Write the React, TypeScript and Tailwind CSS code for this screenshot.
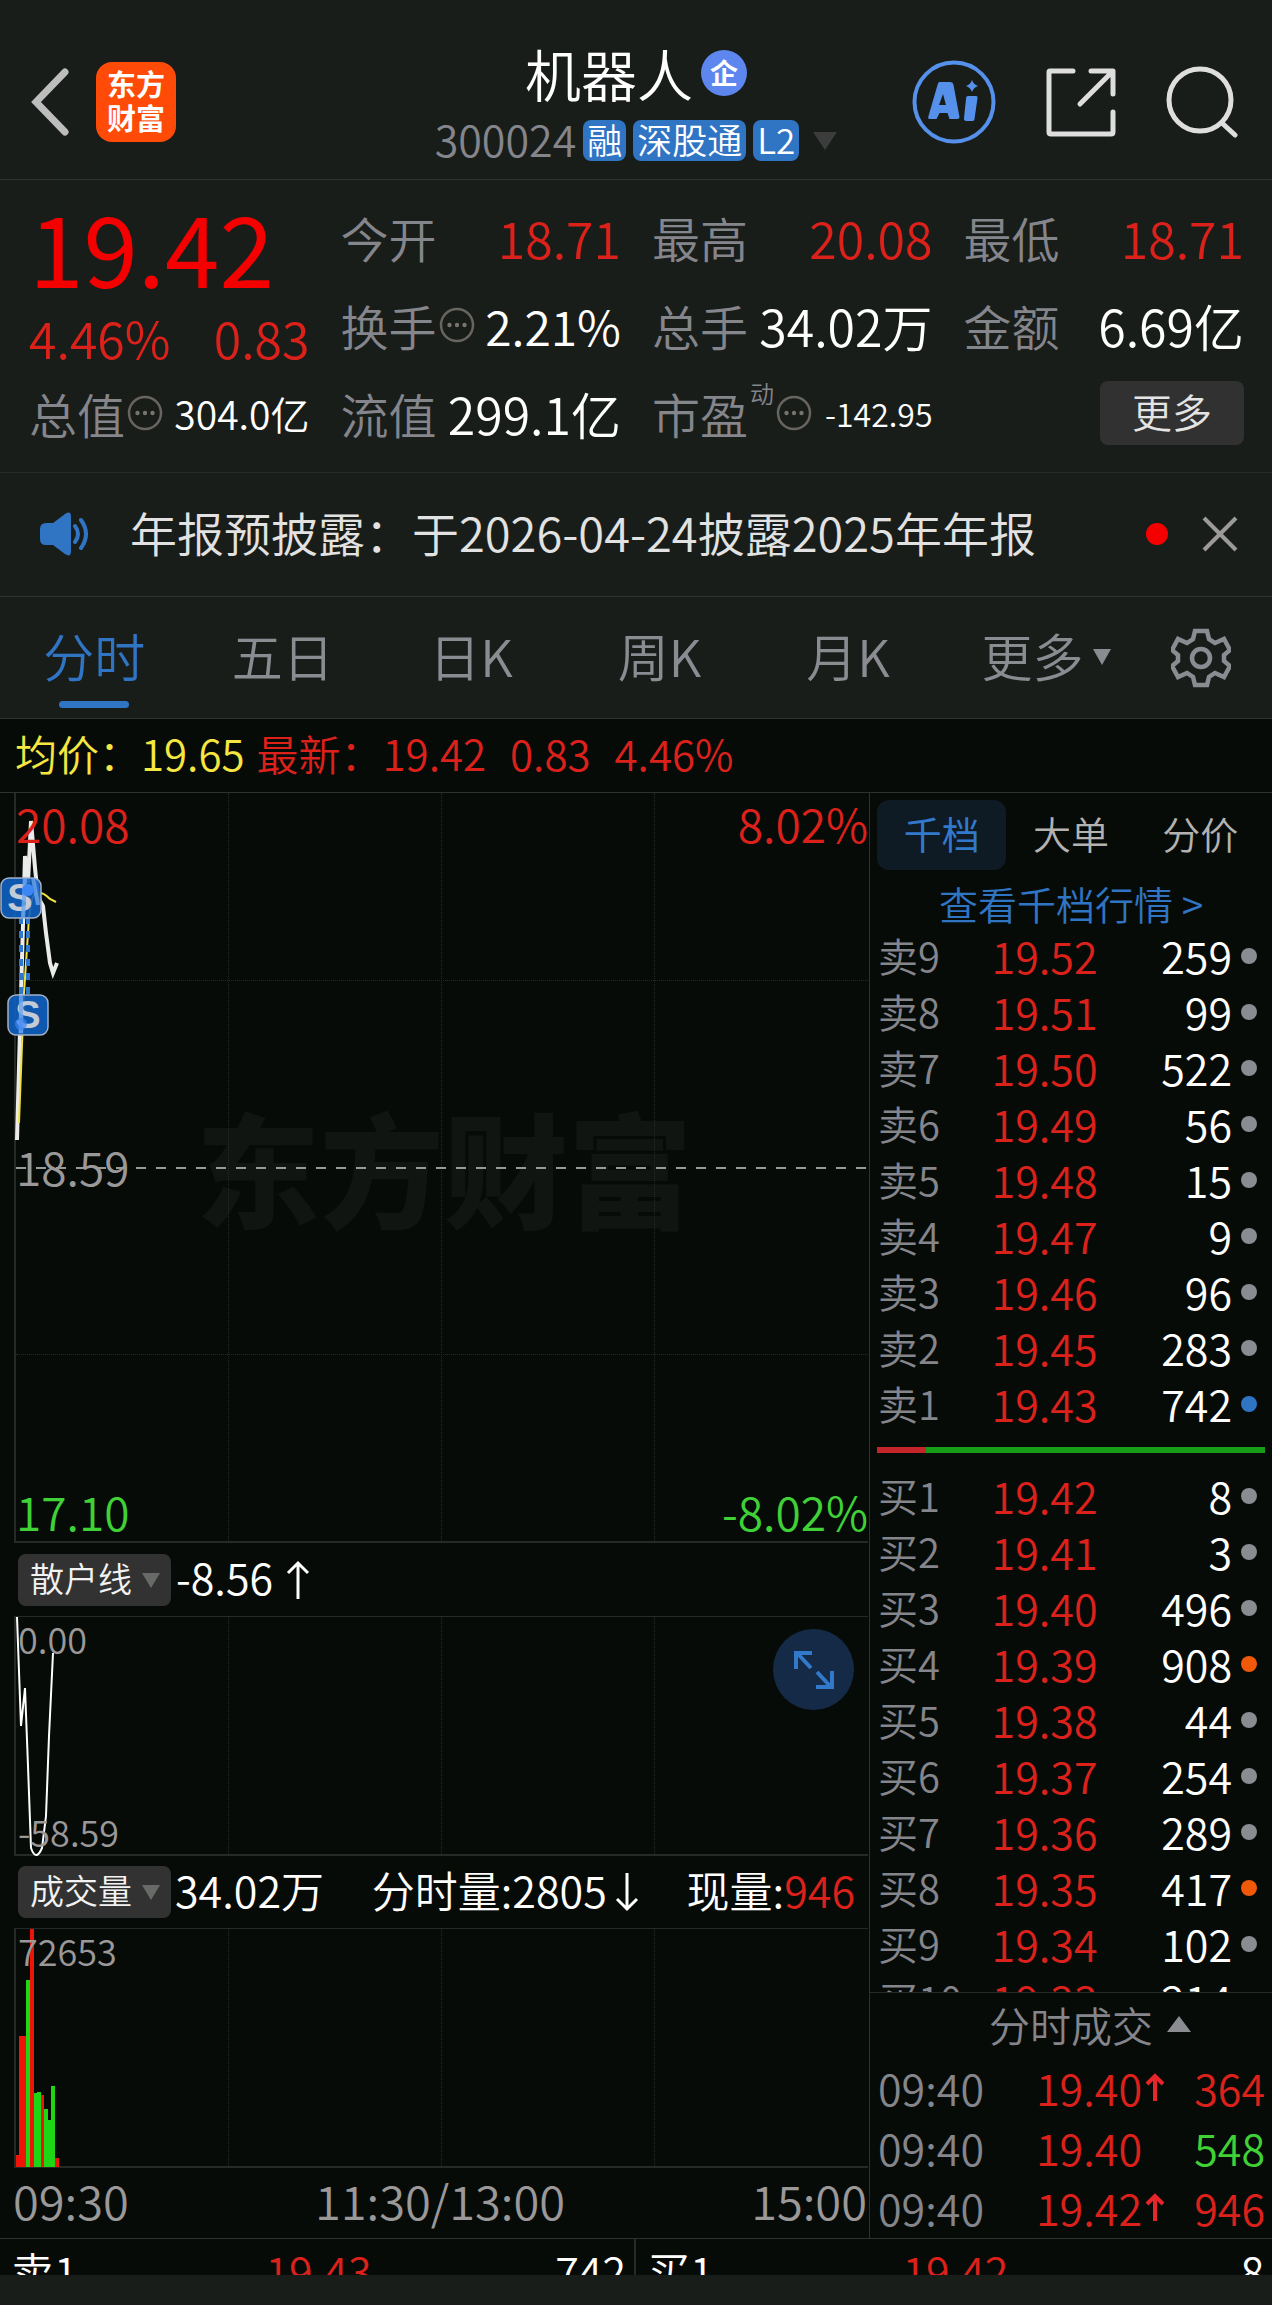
import React from 'react';
import clsx from 'clsx';

type Dot = 'gray' | 'blue' | 'orange';

interface BookLevel {
  label: string;
  price: string;
  volume: string;
  dot: Dot;
}

const asks: BookLevel[] = [
  { label: '卖9', price: '19.52', volume: '259', dot: 'gray' },
  { label: '卖8', price: '19.51', volume: '99', dot: 'gray' },
  { label: '卖7', price: '19.50', volume: '522', dot: 'gray' },
  { label: '卖6', price: '19.49', volume: '56', dot: 'gray' },
  { label: '卖5', price: '19.48', volume: '15', dot: 'gray' },
  { label: '卖4', price: '19.47', volume: '9', dot: 'gray' },
  { label: '卖3', price: '19.46', volume: '96', dot: 'gray' },
  { label: '卖2', price: '19.45', volume: '283', dot: 'gray' },
  { label: '卖1', price: '19.43', volume: '742', dot: 'blue' },
];

const bids: BookLevel[] = [
  { label: '买1', price: '19.42', volume: '8', dot: 'gray' },
  { label: '买2', price: '19.41', volume: '3', dot: 'gray' },
  { label: '买3', price: '19.40', volume: '496', dot: 'gray' },
  { label: '买4', price: '19.39', volume: '908', dot: 'orange' },
  { label: '买5', price: '19.38', volume: '44', dot: 'gray' },
  { label: '买6', price: '19.37', volume: '254', dot: 'gray' },
  { label: '买7', price: '19.36', volume: '289', dot: 'gray' },
  { label: '买8', price: '19.35', volume: '417', dot: 'orange' },
  { label: '买9', price: '19.34', volume: '102', dot: 'gray' },
  { label: '买10', price: '19.33', volume: '214', dot: 'orange' },
];

const trades = [
  { time: '09:40', price: '19.40', up: true, volume: '364', buy: true },
  { time: '09:40', price: '19.40', up: false, volume: '548', buy: false },
  { time: '09:40', price: '19.42', up: true, volume: '946', buy: true },
];

// x, top, width, up
const volumeBars: [number, number, number, boolean][] = [
  [16, 227, 4, true],
  [19, 108, 7, true],
  [26, 52, 4, false],
  [30, 1, 4, true],
  [34, 165, 3, false],
  [37, 164, 4, false],
  [41, 167, 3, true],
  [44, 181, 4, false],
  [48, 192, 3, false],
  [51, 158, 4, false],
  [55, 230, 4, true],
];

const MoreInfo = () => (
  <svg viewBox="0 0 36 36" className="ml-[2px] size-9 shrink-0" aria-hidden="true">
    <circle cx="18" cy="18" r="16" fill="none" stroke="#68645f" strokeWidth="2.5" />
    <circle cx="10.5" cy="18" r="2.2" fill="#77736e" />
    <circle cx="18" cy="18" r="2.2" fill="#77736e" />
    <circle cx="25.5" cy="18" r="2.2" fill="#77736e" />
  </svg>
);

const Arrow = ({ down = false }: { down?: boolean }) => (
  <svg viewBox="0 0 24 40" className="h-10 w-6 shrink-0" aria-hidden="true">
    <path
      d={down ? 'M12 1v36M2 27l10 10 10-10' : 'M12 39V3M2 13L12 3l10 10'}
      fill="none"
      stroke="#fff"
      strokeWidth="3"
    />
  </svg>
);

const Header = () => (
  <header className="grid grid-cols-[1fr_auto_1fr] border-b border-[#2f312f] pt-[42px] pb-[18px]">
    <div className="flex items-center gap-[26px] pl-[30px]">
      <button aria-label="返回">
        <svg viewBox="0 0 40 68" className="h-[68px] w-10">
          <path d="M35 4L6 34l29 30" fill="none" stroke="#bdbdbd" strokeWidth="7" strokeLinecap="round" />
        </svg>
      </button>
      <div className="flex size-20 flex-col items-center justify-center rounded-2xl bg-[#ff4a08] pb-1 text-[29px] leading-[34px] font-bold text-white">
        <span>东方</span>
        <span>财富</span>
      </div>
    </div>

    <div className="flex flex-col items-center">
      <h1 className="flex h-16 items-center gap-[8px] pb-[3px] text-[56px] leading-[64px] text-white">
        机器人
        <span className="flex size-[46px] items-center justify-center rounded-full bg-[#5d86ee] pb-[2px] text-[28px] leading-[30px] font-bold">
          企
        </span>
      </h1>
      <div className="flex items-center gap-[7px] pt-[14px] text-[35px] leading-[41px] text-white">
        <span className="-mt-1 text-[43px] text-[#85858c]">300024</span>
        <span className="h-[41px] rounded-lg bg-[#3074c4] px-[4px] leading-[38px]">融</span>
        <span className="h-[41px] rounded-lg bg-[#3074c4] px-[4px] leading-[38px]">深股通</span>
        <span className="h-[41px] rounded-lg bg-[#3074c4] px-[4px] leading-[38px]">L2</span>
        <button aria-label="切换股票" className="pl-[7px]">
          <svg viewBox="0 0 24 18" className="h-[18px] w-6">
            <path d="M0 0h24L12 18z" fill="#3b3c3b" />
          </svg>
        </button>
      </div>
    </div>

    <div className="flex items-center justify-end gap-[50px] pr-[34px]">
      <button aria-label="AI 助手">
        <svg viewBox="0 0 84 84" className="size-[84px]">
          <circle cx="42" cy="42" r="39.500" fill="none" stroke="#5590ea" strokeWidth="4" />
          <path
            fillRule="evenodd"
            fill="#5590ea"
            d="M27 22h11q3 0 3.500 3l6 32q0 2-2 2h-8l-2-6h-8l-3 6h-7q-2 0-1-3l9-31q1-3 1.500-3zM31 34l-4 11h7z"
          />
          <path fill="#5590ea" d="M56 36h8q2 0 1.500 2l-3 21q0 2-3 2h-5q-3 0-2.500-3l2-19q0-3 2-3zM60 20q1.500 4.500 6 6-4.500 1.500-6 6-1.500-4.500-6-6 4.500-1.500 6-6z" />
        </svg>
      </button>
      <button aria-label="分享">
        <svg viewBox="0 0 70 70" className="size-[70px]" fill="none" stroke="#dedede" strokeWidth="5" strokeLinecap="round" strokeLinejoin="round">
          <path d="M27 4H4q-1 0-1 1v60q0 2 2 2h60q2 0 2-2V45M45 4h22v23M66 5L34 37" />
        </svg>
      </button>
      <button aria-label="搜索">
        <svg viewBox="0 0 72 72" className="size-[72px]" fill="none" stroke="#dedede" strokeWidth="5" strokeLinecap="round">
          <circle cx="34" cy="34" r="31" />
          <path d="M56 57l13 12" />
        </svg>
      </button>
    </div>
  </header>
);

interface StatProps {
  label: string;
  value: string;
  info?: boolean;
  sup?: string;
  className?: string;
}

const Stat = ({ label, value, info, sup, className = 'text-[50px] text-white' }: StatProps) => (
  <div className="flex h-[88px] items-center">
    <span className="text-5xl text-[#85858c]">{label}</span>
    {sup && <sup className="self-start pt-5 pl-[2px] text-2xl text-[#85858c]">{sup}</sup>}
    {info && <MoreInfo />}
    <span className={clsx('ml-auto', className)}>{value}</span>
  </div>
);

const QuotePanel = () => (
  <section className="grid grid-cols-4 gap-x-[31px] border-b border-[#272a28] pt-[13px] pr-[28px] pb-[15px] pl-[29px] whitespace-nowrap">
    <div className="row-span-2">
      <div className="text-[98px] leading-[105px] font-normal text-[#f40000]">19.42</div>
      <div className="flex justify-between pt-[7px] text-[50px] leading-[64px] text-[#dc211b]">
        <span>4.46%</span>
        <span>0.83</span>
      </div>
    </div>
    <Stat label="今开" value="18.71" className="text-[50px] text-[#dc211b]" />
    <Stat label="最高" value="20.08" className="text-[50px] text-[#dc211b]" />
    <Stat label="最低" value="18.71" className="text-[50px] text-[#dc211b]" />
    <Stat label="换手" value="2.21%" info className="text-5xl text-white" />
    <Stat label="总手" value="34.02万" />
    <Stat label="金额" value="6.69亿" />
    <Stat label="总值" value="304.0亿" info className="text-[39px] text-white" />
    <Stat label="流值" value="299.1亿" />
    <Stat label="市盈" sup="动" value="-142.95" info className="text-[32px] text-white" />
    <div className="flex h-[88px] items-center justify-end">
      <button className="h-16 w-36 rounded-lg bg-[#313131] pb-1 text-[40px] leading-[60px] text-[#e4e4e4]">更多</button>
    </div>
  </section>
);

const Notice = () => (
  <section className="flex h-[124px] items-center border-b border-[#2f312f] pr-[34px] pb-[6px] pl-[38px]">
    <svg viewBox="0 0 54 46" className="mt-[4px] h-[46px] w-[54px] shrink-0" aria-hidden="true">
      <path d="M2 18q0-6 6-6h7L27 3q6-4 6 3v34q0 7-6 3l-12-9H8q-6 0-6-6z" fill="#3074c4" />
      <path d="M37 15q6 8 0 16M43 9q10 14 0 28" fill="none" stroke="#3074c4" strokeWidth="4" strokeLinecap="round" />
    </svg>
    <p className="pl-[38px] text-[47px] leading-[64px] whitespace-nowrap text-[#e2e2e2]">
      年报预披露：于2026-04-24披露2025年年报
    </p>
    <span className="mt-[4px] ml-auto size-[22px] rounded-full bg-[#f40000]" />
    <button aria-label="关闭" className="mt-[4px] ml-[34px]">
      <svg viewBox="0 0 36 36" className="size-9">
        <path d="M2 2l32 32M34 2L2 34" stroke="#9d9b9a" strokeWidth="4" />
      </svg>
    </button>
  </section>
);

const PeriodTabs = () => (
  <nav className="grid h-[122px] grid-cols-[repeat(6,4fr)_3fr] items-stretch border-b border-[#2f312f] text-[51px] leading-[110px] text-[#8b8b92]">
    <button className="relative pb-[5px] text-[#3074c4]">
      分时
      <span className="absolute bottom-[10px] left-1/2 h-[7px] w-[70px] -translate-x-1/2 rounded-full bg-[#3074c4]" />
    </button>
    <button className="pb-[5px]">五日</button>
    <button className="pb-[5px]">日K</button>
    <button className="pb-[5px]">周K</button>
    <button className="pb-[5px]">月K</button>
    <button className="flex items-center justify-center gap-[10px] pb-[5px] pl-[20px]">
      更多
      <svg viewBox="0 0 18 16" className="mt-1 h-4 w-[18px]" aria-hidden="true">
        <path d="M0 0h18L9 16z" fill="#8b8b92" />
      </svg>
    </button>
    <button aria-label="设置" className="flex items-center justify-center">
      <svg viewBox="0 0 60 60" className="size-[60px]" fill="none" stroke="#8b8b92" strokeWidth="4.500">
        <path d="M24 3h12l2 8 6 4 9-4 6 11-6 5v6l6 5-6 11-9-4-6 4-2 8H24l-2-8-6-4-9 4-6-11 6-5v-6l-6-5 6-11 9 4 6-4z" />
        <circle cx="30" cy="30" r="9" />
      </svg>
    </button>
  </nav>
);

const GridLines = () => (
  <div className="absolute inset-0 grid grid-cols-4">
    <i className="border-r border-dotted border-[#252a27]" />
    <i className="border-r border-dotted border-[#252a27]" />
    <i className="border-r border-dotted border-[#252a27]" />
  </div>
);

const PriceChart = () => (
  <div className="relative h-[750px] pl-[14px]">
    <div className="relative h-full border-b-2 border-l-2 border-[#262a27]">
      <div className="absolute inset-0 flex items-center justify-center pb-1 pl-1 text-[124px] font-black text-[#101512]">
        东方财富
      </div>
      <GridLines />
      <div className="absolute inset-x-0 top-1/4 border-t border-dotted border-[#252a27]" />
      <div className="absolute inset-x-0 top-3/4 border-t border-dotted border-[#252a27]" />
      <svg className="absolute inset-x-0 top-1/2 h-[2px] w-full" aria-hidden="true">
        <line x1="0" y1="1" x2="100%" y2="1" stroke="#9a9898" strokeWidth="2" strokeDasharray="10 10" />
      </svg>
    </div>
    <svg viewBox="0 0 200 750" className="absolute top-0 left-0 h-[750px] w-[200px]" aria-hidden="true">
      <path d="M17 347L21 200 25 63 28 90 31 28 35 75 38 104 43 113 46 140 50 170 53 180 57 170" fill="none" stroke="#ebebeb" strokeWidth="4" />
      <path d="M19 330L24 200 28 140Q30 102 36 100T50 106L56 109" fill="none" stroke="#f0e040" strokeWidth="2" />
      <path d="M21 124v80M28 124v80" stroke="#2d79cf" strokeWidth="4" strokeDasharray="7 7" />
      <g fill="#1160c2" fillOpacity="0.9" stroke="#a3b0c6" strokeWidth="1.500">
        <rect x="1" y="85" width="40" height="40" rx="8" />
        <rect x="8" y="202" width="40" height="40" rx="8" />
      </g>
      <g fill="#c3cbd6" fontSize="38" fontWeight="bold" fontFamily="Liberation Sans, sans-serif" textAnchor="middle">
        <text x="20" y="118">S</text>
        <text x="28" y="235">S</text>
      </g>
      <path d="M23 125L25 85M33 85L38 112M21 202v38" stroke="#6ea5ee" strokeWidth="4" strokeOpacity="0.8" />
      <circle cx="28" cy="97" r="6" fill="#3d86f5" />
      <circle cx="21" cy="231" r="6" fill="#3d86f5" fillOpacity="0.7" />
    </svg>
    <span className="absolute top-0 left-4 text-[46px] leading-[60px] text-[#dc211b]">20.08</span>
    <span className="absolute top-0 right-0 text-[46px] leading-[60px] text-[#dc211b]">8.02%</span>
    <span className="absolute top-[343px] left-4 text-[46px] leading-[60px] text-[#9a9898]">18.59</span>
    <span className="absolute bottom-[2px] left-4 text-[46px] leading-[60px] text-[#3fd136]">17.10</span>
    <span className="absolute right-0 bottom-[2px] text-[46px] leading-[60px] text-[#3fd136]">-8.02%</span>
  </div>
);

const IndicatorSelect = ({ name }: { name: string }) => (
  <div className="relative h-[52px] w-[153px] shrink-0">
    <select
      aria-label="指标"
      className="block h-full w-full appearance-none rounded-lg bg-[#323232] pb-1 pl-[12px] text-[34px] leading-[48px] text-[#f2f2f2]"
    >
      <option>{name}</option>
    </select>
    <svg viewBox="0 0 18 15" className="pointer-events-none absolute top-[19px] right-[11px] h-[15px] w-[18px]" aria-hidden="true">
      <path d="M0 0h18L9 15z" fill="#686a68" />
    </svg>
  </div>
);

const RetailChart = () => (
  <div className="relative h-[240px] pl-[14px]">
    <div className="relative h-full border-t border-b-2 border-l-2 border-[#262a27]">
      <GridLines />
    </div>
    <svg viewBox="0 0 200 240" className="absolute top-0 left-0 h-[240px] w-[200px]" aria-hidden="true">
      <path d="M17 1L21 110 25 72 28 150 31 232Q36 246 42 232L46 200 49 120 53 37" fill="none" stroke="#fff" strokeWidth="2" />
    </svg>
    <span className="absolute top-0 left-[18px] text-4xl leading-[44px] text-[#9a9898]">0.00</span>
    <span className="absolute bottom-[3px] left-[18px] text-4xl leading-[44px] text-[#9a9898]">-58.59</span>
    <button
      aria-label="全屏"
      className="absolute top-[13px] right-[14px] flex size-[81px] items-center justify-center rounded-full bg-[#142a47]"
    >
      <svg viewBox="0 0 40 40" className="size-10" fill="none" stroke="#3279cc" strokeWidth="4">
        <path d="M2 19V3h16M4 4l13 14M38 21v16H22M36 36L23 22" />
      </svg>
    </button>
  </div>
);

const VolumeChart = () => (
  <div className="relative h-[240px] pl-[14px]">
    <div className="relative h-full border-t border-b-2 border-l-2 border-[#262a27]">
      <GridLines />
    </div>
    <svg viewBox="0 0 200 240" className="absolute top-0 left-0 h-[240px] w-[200px]" aria-hidden="true">
      {volumeBars.map(([x, top, width, up]) => (
        <rect key={x} x={x} y={top} width={width} height={239 - top} fill={up ? '#ee1408' : '#1fd614'} />
      ))}
    </svg>
    <span className="absolute top-0 left-[18px] text-4xl leading-[44px] text-[#9a9898]">72653</span>
  </div>
);

const dotColors: Record<Dot, string> = {
  gray: 'bg-[#8b8b92]',
  blue: 'bg-[#3074c4]',
  orange: 'bg-[#f0590a]',
};

const BookTable = ({ levels, label }: { levels: BookLevel[]; label: string }) => (
  <table aria-label={label} className="w-full table-fixed">
    <tbody>
      {levels.map((level) => (
        <tr key={level.label} className="h-14 text-[43px] leading-[52px] whitespace-nowrap">
          <th scope="row" className="w-[28%] pb-[3px] pl-[8px] text-left text-[40px] font-[350] text-[#85858c]">
            {level.label}
          </th>
          <td className="pb-[3px] pl-[9px] text-[#dc211b]">{level.price}</td>
          <td className="pb-[3px] text-right text-white">{level.volume}</td>
          <td className="w-[40px] pl-[9px]">
            <span className={clsx('block size-4 rounded-full', dotColors[level.dot])} />
          </td>
        </tr>
      ))}
    </tbody>
  </table>
);

const OrderBook = () => (
  <aside className="flex flex-col border-l border-[#2f312f]">
    <div className="grid grid-cols-3 pt-[7px] pr-[7px] pl-[7px] text-[38px] leading-[66px] text-[#b4b2b0]">
      <button className="h-[70px] rounded-xl bg-[#0e1a24] pb-1 font-normal text-[#3279cc]">千档</button>
      <button className="pb-1">大单</button>
      <button className="pb-1">分价</button>
    </div>
    <a href="#depth" className="h-[58px] text-center text-[39px] leading-[66px] text-[#3074c4]">
      查看千档行情 &gt;
    </a>
    <BookTable levels={asks} label="卖盘" />
    <div className="flex h-9 items-center px-[7px]">
      <div className="flex h-[6px] w-full bg-[#179c17]">
        <div className="w-1/8 bg-[#c4252a]" />
      </div>
    </div>
    <div className="h-[524px] overflow-hidden">
      <BookTable levels={bids} label="买盘" />
    </div>
    <button className="flex h-[66px] items-center justify-center gap-[14px] border-t border-[#262a27] pb-[4px] pl-[38px] text-[41px] leading-[60px] text-[#85858c]">
      分时成交
      <svg viewBox="0 0 24 16" className="h-4 w-6" aria-hidden="true">
        <path d="M12 0l12 16H0z" fill="#8b8b92" />
      </svg>
    </button>
    <table aria-label="分时成交" className="w-full flex-1 table-fixed">
      <tbody>
        {trades.map((trade, i) => (
          <tr key={i} className="text-[43px] leading-[54px] whitespace-nowrap text-[#dc211b]">
            <td className="pb-[3px] pl-[8px] text-[#85858c]">{trade.time}</td>
            <td className="w-[146px] pb-[3px]">
              <span className="flex items-center gap-[3px]">
                {trade.price}
                {trade.up && (
                  <svg viewBox="0 0 20 28" className="h-7 w-5" aria-label="涨">
                    <path d="M10 28V3M2 11l8-8 8 8" fill="none" stroke="#e8262a" strokeWidth="4" />
                  </svg>
                )}
              </span>
            </td>
            <td className={clsx('w-[90px] pr-[7px] pb-[3px] text-right', !trade.buy && 'text-[#3fd136]')}>
              {trade.volume}
            </td>
          </tr>
        ))}
      </tbody>
    </table>
  </aside>
);

const BestQuotes = () => (
  <section className="grid h-[37px] grid-cols-2 overflow-hidden border-t border-[#2f312f] text-[43px] leading-[62px] text-white">
    <div className="grid grid-cols-3 border-r-2 border-[#262a27] pr-[8px] pl-[11px]">
      <span>卖1</span>
      <span className="text-center text-[#dc211b]">19.43</span>
      <span className="text-right">742</span>
    </div>
    <div className="grid grid-cols-3 pr-[8px] pl-[11px]">
      <span>买1</span>
      <span className="text-center text-[#dc211b]">19.42</span>
      <span className="text-right">8</span>
    </div>
  </section>
);

export default function App() {
  return (
    <div className="min-h-screen bg-[#191d1a] font-['Noto_Sans_CJK_SC','Noto_Sans',sans-serif] font-[350]">
      <Header />
      <QuotePanel />
      <Notice />
      <PeriodTabs />
      <main className="bg-[#070b08]">
        <div className="flex h-[74px] border-b border-[#2f312f] pl-[15px] text-[42px] leading-[68px] whitespace-nowrap text-[#dc211b]">
          <span className="text-[#f5e642]">均价：19.65</span>
          <span className="pl-3">最新：19.42</span>
          <span className="pl-6">0.83</span>
          <span className="pl-6">4.46%</span>
        </div>
        <div className="grid grid-cols-[869fr_403fr]">
          <section className="min-w-0 pr-px">
            <PriceChart />
            <div className="flex h-[73px] items-center pl-[18px] text-[43px] leading-[60px] text-white">
              <IndicatorSelect name="散户线" />
              <span className="pr-[13px] pb-[8px] pl-[5px]">-8.56</span>
              <Arrow />
            </div>
            <RetailChart />
            <div className="flex h-[72px] items-center pr-[13px] pl-[18px] text-[43px] leading-[60px] whitespace-nowrap text-white">
              <IndicatorSelect name="成交量" />
              <span className="pb-[7px] pl-[4px]">34.02万</span>
              <span className="ml-auto pr-[8px] pb-[7px]">分时量:2805</span>
              <Arrow down />
              <span className="ml-auto pb-[7px]">
                现量:<span className="text-[#dc211b]">946</span>
              </span>
            </div>
            <VolumeChart />
            <div className="flex h-[70px] justify-between pr-px pl-[13px] text-[47px] leading-[64px] text-[#9a9898]">
              <span>09:30</span>
              <span>11:30/13:00</span>
              <span>15:00</span>
            </div>
          </section>
          <OrderBook />
        </div>
        <BestQuotes />
      </main>
    </div>
  );
}
